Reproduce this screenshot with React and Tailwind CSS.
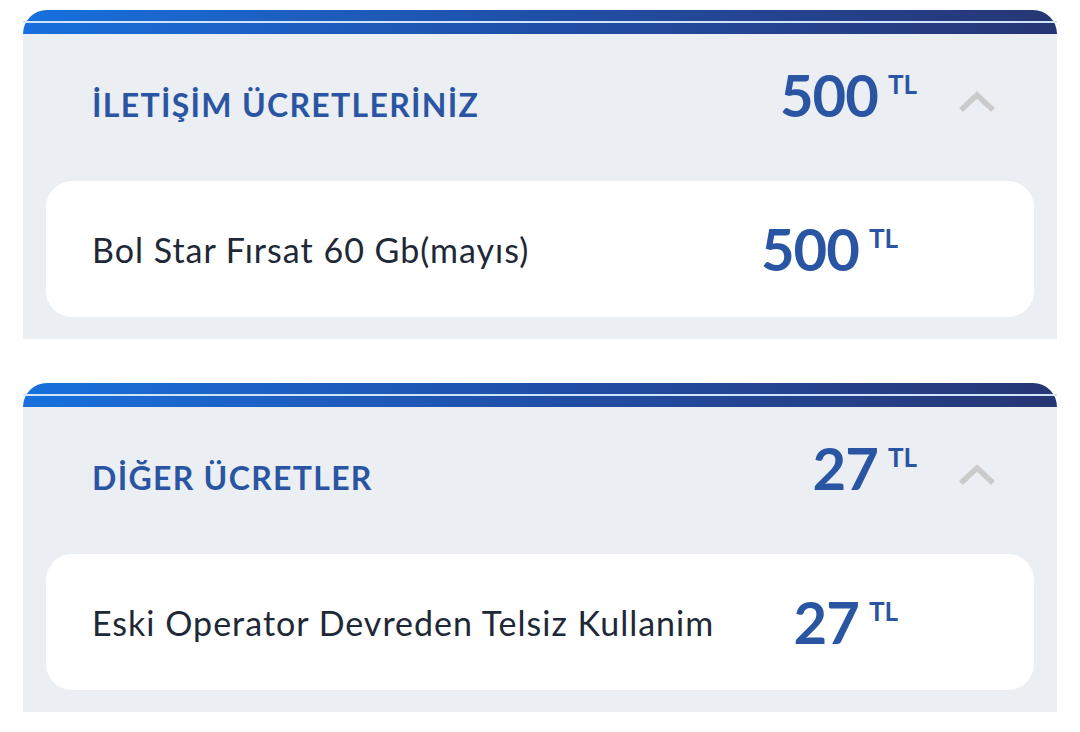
import React from "react";

function Chevron() {
  return (
    <svg width="36" height="22" viewBox="0 0 36 22" className="block">
      <path d="M2 19 L18 4 L34 19" fill="none" stroke="#cbcbcb" strokeWidth="5.5" strokeLinecap="butt" strokeLinejoin="miter" />
    </svg>
  );
}

function Price({ value }) {
  return (
    <div className="flex items-start" style={{ fontFamily: "Lato, 'Open Sans', sans-serif" }}>
      <span className="text-[58px] leading-none font-bold text-[#2a55a3] tracking-[-1px]">{value}</span>
      <span className="ml-[10px] mt-[5px] text-[26px] leading-none font-bold text-[#2a55a3]">TL</span>
    </div>
  );
}

function Section({ title, total, item, amount }) {
  return (
    <div className="mx-[23px] flex flex-col">
      <div className="relative h-[24px] rounded-t-[26px] bg-gradient-to-r from-[#1670dd] via-[#1f4fa8] to-[#263674]">
        <div className="absolute left-0 right-0 top-[11px] h-[2px] bg-[#cfe3fb]" />
      </div>
      <div className="bg-[#ebeef2] px-[23px] pb-[22px]">
        <div className="flex h-[147px] items-center pl-[46px] pr-[39px]">
          <div className="-mt-[6px] flex-1 text-[32px] font-bold text-[#2a55a3] tracking-[1.3px]" style={{ fontFamily: "Lato, 'Open Sans', sans-serif" }}>
            {title}
          </div>
          <div className="-mt-[26px]">
            <Price value={total} />
          </div>
          <div className="ml-[42px] -mt-[11px]">
            <Chevron />
          </div>
        </div>
        <div className="flex h-[136px] items-center rounded-[26px] bg-white pl-[46px]">
          <div className="flex-1 text-[34px] text-[#1e2836] tracking-[1px]" style={{ fontFamily: "Lato, 'Open Sans', sans-serif" }}>
            {item}
          </div>
          <div className="mr-[136px]">
            <Price value={amount} />
          </div>
        </div>
      </div>
    </div>
  );
}

export default function App() {
  return (
    <div className="min-h-[732px] w-[1080px] bg-white pt-[10px]">
      <Section title="İLETİŞİM ÜCRETLERİNİZ" total="500" item="Bol Star Fırsat 60 Gb(mayıs)" amount="500" />
      <div className="h-[44px]" />
      <Section title="DİĞER ÜCRETLER" total="27" item="Eski Operator Devreden Telsiz Kullanim" amount="27" />
    </div>
  );
}
